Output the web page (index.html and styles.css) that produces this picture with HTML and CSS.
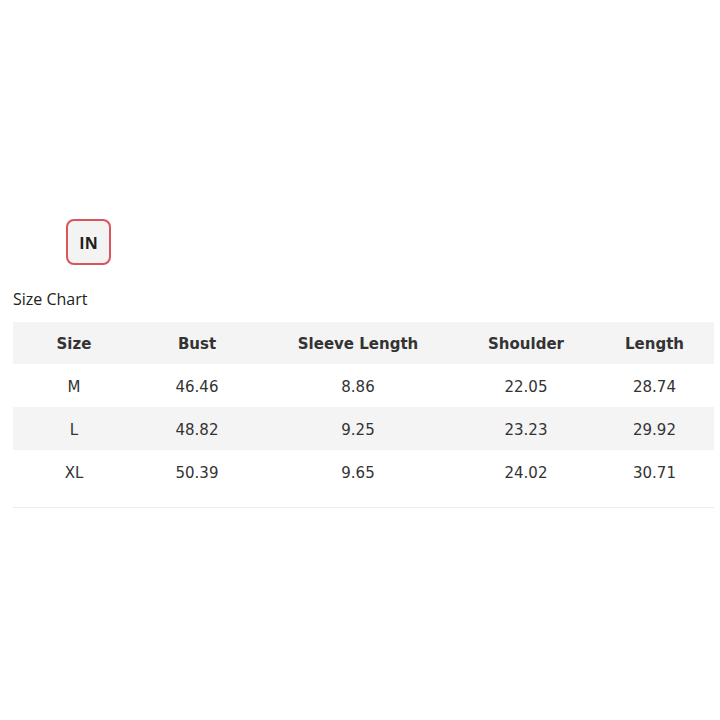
FILE: index.html
```html
<!DOCTYPE html>
<html>
<head>
<meta charset="utf-8">
<link rel="stylesheet" href="styles.css">
</head>
<body>
<div class="page">
  <div class="units">
    <button class="unit-btn">IN</button>
  </div>
  <div class="title">Size Chart</div>
  <div class="table-wrap">
    <table class="chart">
      <colgroup>
        <col class="c1"><col class="c2"><col class="c3"><col class="c4"><col class="c5">
      </colgroup>
      <thead>
        <tr><th>Size</th><th>Bust</th><th>Sleeve Length</th><th>Shoulder</th><th>Length</th></tr>
      </thead>
      <tbody>
        <tr><td>M</td><td>46.46</td><td>8.86</td><td>22.05</td><td>28.74</td></tr>
        <tr class="alt"><td>L</td><td>48.82</td><td>9.25</td><td>23.23</td><td>29.92</td></tr>
        <tr><td>XL</td><td>50.39</td><td>9.65</td><td>24.02</td><td>30.71</td></tr>
      </tbody>
    </table>
  </div>
</div>
</body>
</html>
```

FILE: styles.css
```css
html, body {
  margin: 0;
  padding: 0;
  background: #fff;
}
.page {
  padding: 219px 6px 0 13px;
}
.units {
  display: flex;
  padding-left: 53px;
}
.unit-btn {
  width: 45px;
  height: 46px;
  box-sizing: border-box;
  border: 2px solid #d9555a;
  border-radius: 8px;
  background: #f3f3f3;
  font-family: "Open Sans", "Noto Sans", sans-serif;
  font-weight: bold;
  font-size: 16px;
  color: #1e1e1e;
  padding: 2px 0 0 0;
  display: flex;
  align-items: center;
  justify-content: center;
}
.title {
  margin-top: 23px;
  font-family: "Open Sans", "Noto Sans", sans-serif;
  font-size: 16px;
  line-height: 22px;
  color: #222;
}
.table-wrap {
  margin-top: 12px;
  padding-bottom: 14px;
  border-bottom: 1px solid #ededed;
}
.chart {
  width: 100%;
  border-collapse: collapse;
  table-layout: fixed;
  font-family: "DejaVu Sans", Verdana, sans-serif;
  font-size: 15px;
  color: #333;
}
.c1 { width: 122px; }
.c2 { width: 124px; }
.c3 { width: 198px; }
.c4 { width: 138px; }
.c5 { width: auto; }
.chart th, .chart td {
  text-align: center;
  padding: 2px 0 0 0;
}
.chart thead tr {
  background: #f4f4f4;
}
.chart th {
  height: 40px;
  font-weight: bold;
  color: #333;
}
.chart td {
  height: 41px;
}
.chart tr.alt {
  background: #f4f4f4;
}
```
